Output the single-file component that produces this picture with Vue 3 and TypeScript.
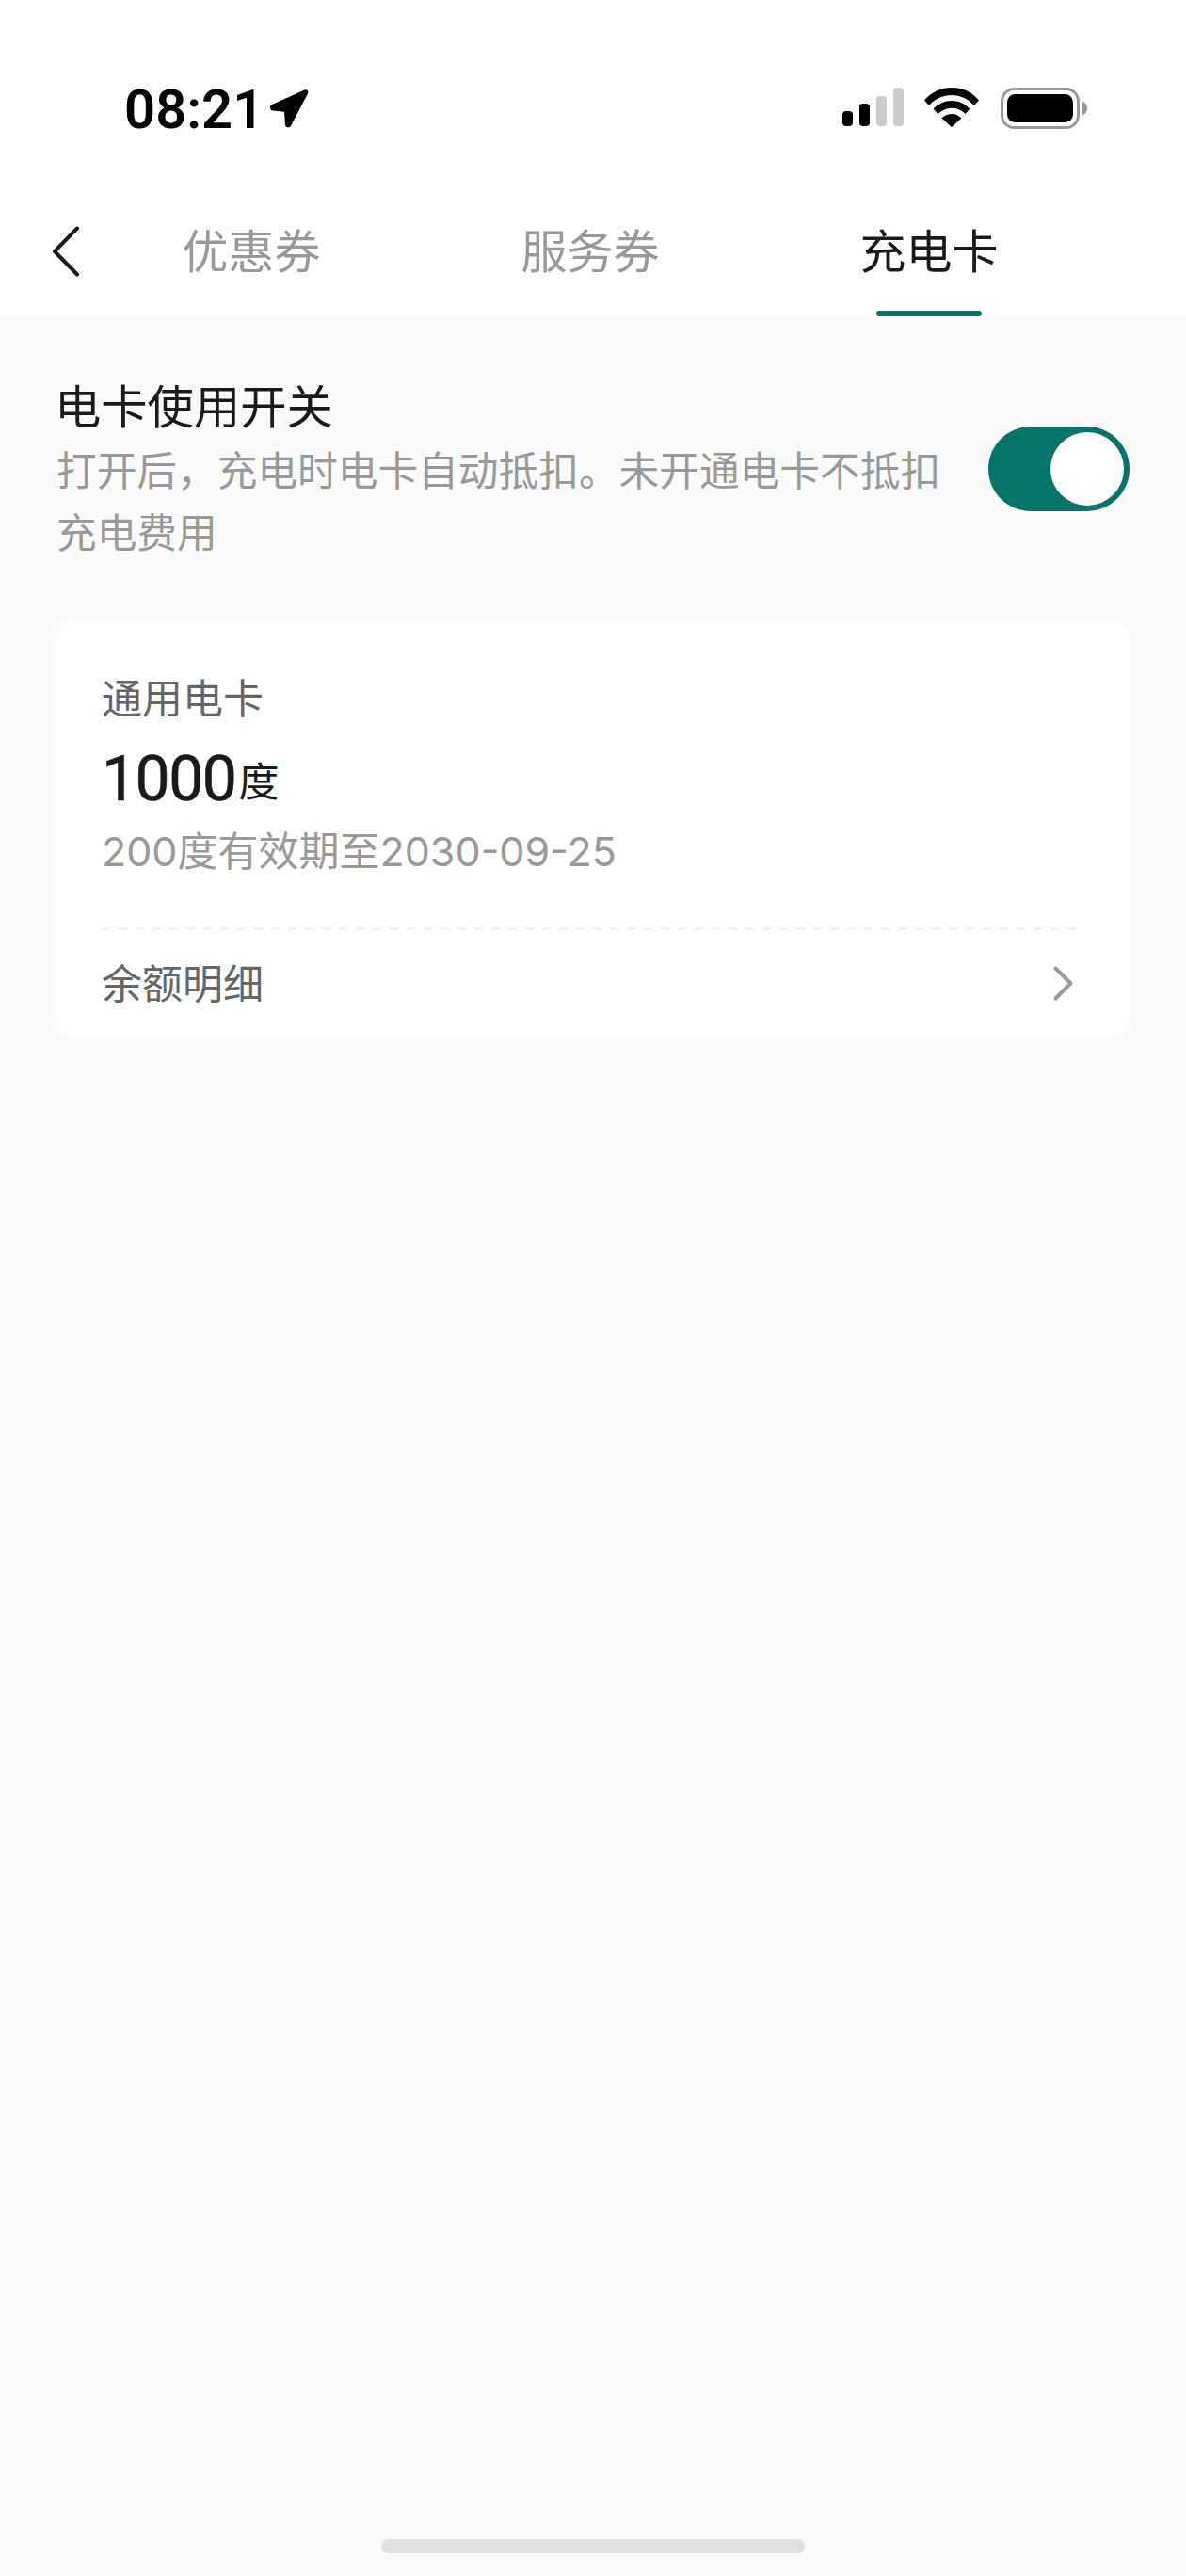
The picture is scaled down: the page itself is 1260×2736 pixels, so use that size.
<script setup lang="ts">
import { ref } from 'vue'

const tabs = ['优惠券', '服务券', '充电卡']
const activeTab = ref(2)
const cardOn = ref(true)
</script>

<template>
  <div class="page">
    <div class="status-bar">
      <div class="clock">
        <span class="time">08:21</span>
        <svg class="loc" width="42" height="42" viewBox="0 0 42 42">
          <path d="M37.500 1.500 3 17C0 18.500.5 23 4 23.500l12 1.300 1 13.700c.3 3.800 5 4 6.200.8L41 5.500c1.100-3-.8-5-3.500-4z" fill="#000" />
        </svg>
      </div>
      <div class="indicators">
        <svg width="65" height="41" viewBox="0 0 65 41">
          <rect x="0" y="25" width="11" height="16" rx="4" fill="#000" />
          <rect x="18" y="17" width="11" height="24" rx="4" fill="#000" />
          <rect x="36" y="9" width="11" height="32" rx="4" fill="#ccc" />
          <rect x="54" y="0" width="11" height="41" rx="4" fill="#ccc" />
        </svg>
        <svg class="wifi" width="58" height="42" viewBox="0 0 58 42">
          <path d="M29 0C18 0 8 4.200 0 13.500l5 5.500C12 11.500 20 8 29 8s17 3.500 24 11l5-5.500C50 4.200 40 0 29 0z" fill="#000" />
          <path d="M29 14c-7.500 0-14 3-19.500 8.500l5 5.500c4-4 9-6.300 14.500-6.300S39.500 24 43.500 28l5-5.500C43 17 36.500 14 29 14z" fill="#000" />
          <path d="M29 28c-4 0-7.500 1.500-10.500 4.500L29 42l10.500-9.500C36.500 29.500 33 28 29 28z" fill="#000" />
        </svg>
        <svg class="battery" width="93" height="44" viewBox="0 0 93 44">
          <rect x="1.500" y="1.500" width="81" height="41" rx="13" fill="none" stroke="#999" stroke-width="3" />
          <rect x="7" y="7" width="70" height="30" rx="8.500" fill="#000" />
          <path d="M87 15c3 .6 5 3.400 5 7s-2 6.400-5 7z" fill="#999" />
        </svg>
      </div>
    </div>

    <header class="tab-header">
      <button class="back" aria-label="返回">
        <svg width="30" height="54" viewBox="0 0 30 54">
          <path d="M27 2.500 3 27l24 24.500" fill="none" stroke="#1a1a1a" stroke-width="4" stroke-linecap="round" stroke-linejoin="round" />
        </svg>
      </button>
      <nav class="tabs">
        <div
          v-for="(tab, i) in tabs"
          :key="tab"
          class="tab"
          :class="{ active: i === activeTab }"
          @click="activeTab = i"
        >
          {{ tab }}
        </div>
      </nav>
    </header>

    <main class="content">
      <section class="switch-row">
        <div class="switch-text">
          <div class="switch-title">电卡使用开关</div>
          <div class="switch-desc">打开后，充电时电卡自动抵扣。未开通电卡不抵扣充电费用</div>
        </div>
        <div class="toggle" :class="{ on: cardOn }" @click="cardOn = !cardOn">
          <span class="knob"></span>
        </div>
      </section>

      <section class="card">
        <div class="card-label">通用电卡</div>
        <div class="amount"><span class="amount-num">1000</span><span class="amount-unit">度</span></div>
        <div class="expiry">200度有效期至2030-09-25</div>
        <div class="dash"></div>
        <div class="detail-row">
          <span class="detail-text">余额明细</span>
          <svg width="21" height="37" viewBox="0 0 21 37">
            <path d="M2.500 2.500 18.500 18.500 2.500 34.500" fill="none" stroke="#999" stroke-width="4" stroke-linecap="round" stroke-linejoin="round" />
          </svg>
        </div>
      </section>
    </main>

    <div class="home-bar"></div>
  </div>
</template>

<style scoped>
.page {
  width: 1260px;
  height: 2736px;
  display: flex;
  flex-direction: column;
  background: #fafafa;
  font-family: Inter, "Noto Sans CJK SC", sans-serif;
  overflow: hidden;
}

.status-bar {
  height: 210px;
  background: #fff;
  display: flex;
  justify-content: space-between;
  padding: 91px 104px 0 132px;
  box-sizing: border-box;
}

.clock {
  display: flex;
  align-items: flex-start;
  height: 50px;
}

.time {
  font-family: Roboto, sans-serif;
  font-size: 58px;
  font-weight: 600;
  line-height: 50px;
  color: #000;
}

.loc {
  margin: 3px 0 0 6px;
}

.indicators {
  display: flex;
  align-items: flex-start;
  padding-top: 2px;
}

.wifi {
  margin-left: 22px;
}

.battery {
  margin: 0 0 0 23px;
}

.tab-header {
  height: 126px;
  background: #fff;
  display: flex;
  padding-right: 93px;
}

.back {
  width: 87px;
  flex: none;
  border: none;
  background: none;
  padding: 30px 0 0 55px;
  display: flex;
  align-items: flex-start;
}

.tabs {
  flex: 1;
  display: grid;
  grid-template-columns: repeat(3, 1fr);
}

.tab {
  position: relative;
  text-align: center;
  font-size: 49px;
  line-height: 70px;
  padding-top: 23px;
  color: #999;
}

.tab.active {
  color: #1a1a1a;
}

.tab.active::after {
  content: "";
  position: absolute;
  left: 124px;
  bottom: 0;
  width: 112px;
  height: 6px;
  border-radius: 3px;
  background: #067567;
}

.content {
  padding: 66px 60px 0;
}

.switch-row {
  display: flex;
  justify-content: space-between;
  align-items: flex-start;
}

.switch-text {
  width: 950px;
}

.switch-title {
  font-size: 49.3px;
  line-height: 60px;
  margin-left: -2px;
  color: #1a1a1a;
}

.switch-desc {
  margin-top: 6px;
  font-size: 42.7px;
  line-height: 66px;
  color: #999;
}

.toggle {
  width: 150px;
  height: 90px;
  margin-top: 51px;
  box-sizing: border-box;
  border-radius: 45px;
  padding: 6px;
  background: #ccc;
  display: flex;
}

.toggle.on {
  background: #067567;
  justify-content: flex-end;
}

.knob {
  width: 78px;
  height: 78px;
  border-radius: 50%;
  background: #fff;
}

.card {
  margin-top: 59px;
  height: 442px;
  box-sizing: border-box;
  padding: 53px 55px 0 48px;
  background: #fff;
  border-radius: 20px;
}

.card-label {
  font-size: 43px;
  line-height: 60px;
  color: #666;
}

.amount {
  margin-top: 16px;
  height: 80px;
  display: flex;
  align-items: center;
  line-height: 80px;
  color: #1a1a1a;
}

.amount-num {
  font-size: 66px;
  font-family: Roboto, sans-serif;
  letter-spacing: -1.500px;
  -webkit-text-stroke: 0.6px #1a1a1a;
}

.amount-unit {
  font-size: 43px;
  margin: 4px 0 0 3px;
}

.expiry {
  margin-top: 6px;
  font-size: 43px;
  line-height: 60px;
  color: #999;
}

.dash {
  margin-top: 51px;
  height: 3px;
  background: repeating-linear-gradient(90deg, #f2f2f2 0 9px, transparent 9px 18px);
}

.detail-row {
  height: 113px;
  display: flex;
  justify-content: space-between;
  align-items: center;
  font-size: 43px;
  color: #666;
}

.detail-text {
  margin-bottom: 6px;
}

.detail-row svg {
  margin-right: 5px;
}

.home-bar {
  width: 450px;
  height: 15px;
  margin: auto auto 24px;
  border-radius: 8px;
  background: #e0e0e0;
}
</style>
